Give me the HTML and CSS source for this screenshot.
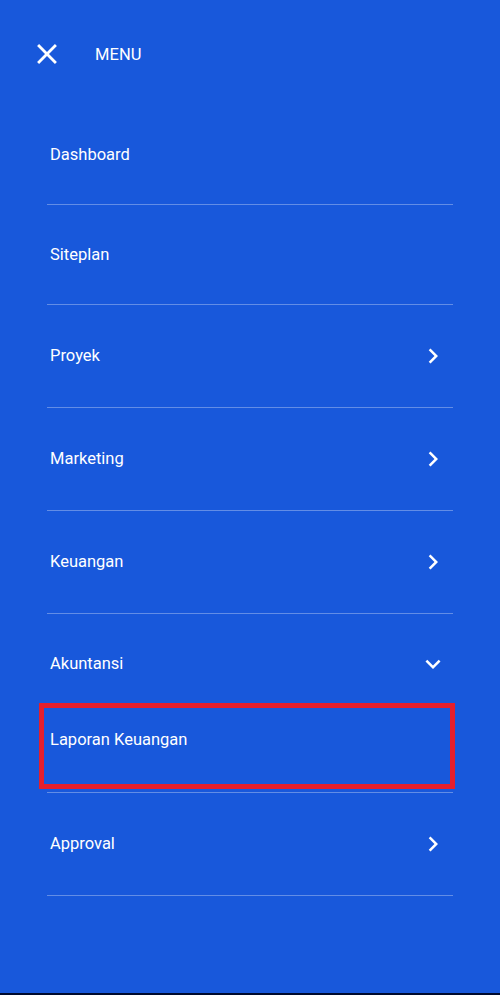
FILE: index.html
```html
<!DOCTYPE html>
<html lang="id">
<head>
<meta charset="utf-8">
<title>Menu</title>
<link rel="stylesheet" href="styles.css">
</head>
<body>
<div class="screen">
  <header class="header">
    <svg class="close-icon" viewBox="0 0 24 24" aria-hidden="true"><path d="M19 6.41L17.59 5 12 10.59 6.41 5 5 6.41 10.59 12 5 17.59 6.41 19 12 13.41 17.59 19 19 17.59 13.41 12z"/></svg>
    <span class="header-title">MENU</span>
  </header>
  <nav class="menu">
    <div class="item"><span class="label">Dashboard</span></div>
    <div class="item"><span class="label">Siteplan</span></div>
    <div class="item item--arrow"><span class="label">Proyek</span><svg class="chev" viewBox="0 0 24 24"><path d="M10 6L8.59 7.41 13.17 12l-4.58 4.59L10 18l6-6z"/></svg></div>
    <div class="item item--arrow"><span class="label">Marketing</span><svg class="chev" viewBox="0 0 24 24"><path d="M10 6L8.59 7.41 13.17 12l-4.58 4.59L10 18l6-6z"/></svg></div>
    <div class="item item--arrow"><span class="label">Keuangan</span><svg class="chev" viewBox="0 0 24 24"><path d="M10 6L8.59 7.41 13.17 12l-4.58 4.59L10 18l6-6z"/></svg></div>
    <div class="group">
      <div class="item item--open"><span class="label">Akuntansi</span><svg class="chev" viewBox="0 0 24 24"><path d="M16.59 8.59L12 13.17 7.41 8.59 6 10l6 6 6-6z"/></svg></div>
      <div class="subitem"><span class="label">Laporan Keuangan</span><span class="highlight"></span></div>
    </div>
    <div class="item item--arrow"><span class="label">Approval</span><svg class="chev" viewBox="0 0 24 24"><path d="M10 6L8.59 7.41 13.17 12l-4.58 4.59L10 18l6-6z"/></svg></div>
  </nav>
</div>
</body>
</html>
```
FILE: styles.css
```css
html, body {
  margin: 0;
  padding: 0;
}
body {
  background: #000a2e;
  font-family: Roboto, "Liberation Sans", Arial, sans-serif;
  color: #ffffff;
}
.screen {
  box-sizing: border-box;
  height: 993px;
  background: #1858db;
  overflow: hidden;
}
.header {
  box-sizing: border-box;
  height: 105px;
  display: flex;
  align-items: flex-start;
  padding: 37px 0 0 30px;
}
.close-icon {
  width: 34px;
  height: 34px;
  fill: #ffffff;
  flex: none;
}
.header-title {
  margin-left: 31px;
  margin-top: 1px;
  font-size: 16.5px;
  line-height: 34px;
  letter-spacing: 0.1px;
}
.menu {
  margin: 0 47px;
}
.item {
  box-sizing: border-box;
  height: 100px;
  display: flex;
  align-items: center;
  justify-content: space-between;
  padding: 0 5px 0 3px;
  border-bottom: 1px solid rgba(255, 255, 255, 0.32);
}
.item--arrow {
  height: 103px;
}
.item--open {
  height: 100px;
  border-bottom: none;
}
.label {
  font-size: 16.5px;
  line-height: 20px;
}
.chev {
  width: 30px;
  height: 30px;
  fill: #ffffff;
  flex: none;
}
.subitem {
  position: relative;
  box-sizing: border-box;
  height: 79px;
  padding: 16px 0 0 3px;
  border-bottom: 1px solid rgba(255, 255, 255, 0.32);
}
.highlight {
  position: absolute;
  left: -8px;
  right: -2px;
  top: -11px;
  bottom: 3px;
  border: 5px solid #e41f2d;
  box-sizing: border-box;
}
```
